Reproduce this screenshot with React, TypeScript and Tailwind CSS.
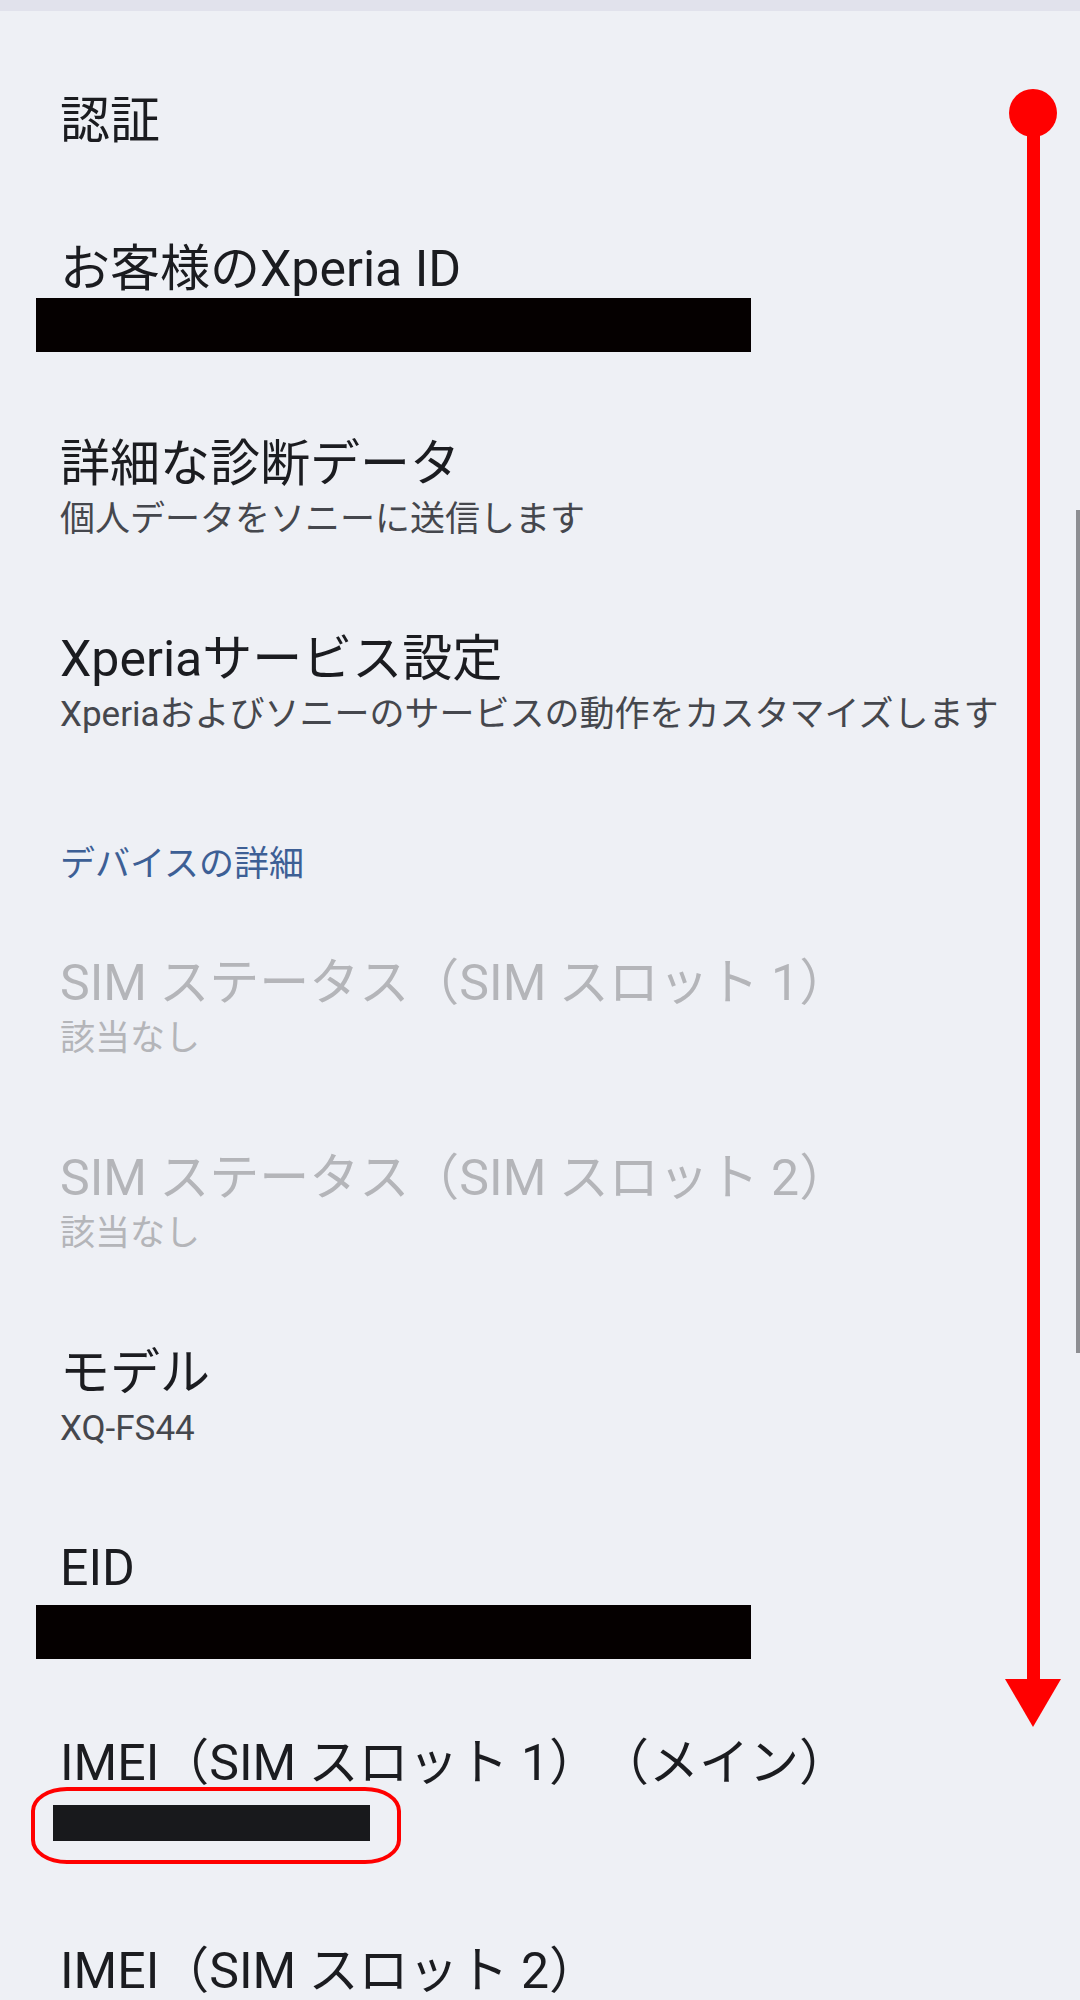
import React from "react";

type Item = {
  title: string;
  sub?: string;
  disabled?: boolean;
  redact?: "wide" | "wideLow" | "imei";
};

const FONT = "font-['Roboto','Noto_Sans_CJK_JP',sans-serif]";

function Row({ item }: { item: Item }) {
  const titleColor = item.disabled ? "text-[#b4b5b9]" : "text-[#1b1c20]";
  const subColor = item.disabled ? "text-[#b4b5b9]" : "text-[#45474d]";

  return (
    <div className="pl-[60px] pr-[120px] pt-[41px] pb-[42px]">
      <div
        className={`text-[50px] leading-[58px] whitespace-nowrap [text-spacing-trim:space-all] ${titleColor}`}
      >
        {item.title}
      </div>
      <div className={`h-[54px] text-[35px] leading-[54px] whitespace-nowrap ${subColor}`}>
        {item.sub}
        {item.redact === "wide" && (
          <div className="-ml-[24px] w-[715px] h-[54px] bg-[#050000]" />
        )}
        {item.redact === "wideLow" && (
          <div className="-ml-[24px] translate-y-[8px] w-[715px] h-[54px] bg-[#050000]" />
        )}
        {item.redact === "imei" && (
          <div className="relative -ml-[7px] mt-[13px] w-[317px] h-[36px] bg-[#18191c]">
            <div className="absolute -left-[22px] -top-[18px] w-[370px] h-[77px] border-[4px] border-[#ff0000] rounded-[36px_/_24px]" />
          </div>
        )}
      </div>
    </div>
  );
}

const account: Item[] = [
  { title: "お客様のXperia ID", redact: "wide" },
  { title: "詳細な診断データ", sub: "個人データをソニーに送信します" },
  {
    title: "Xperiaサービス設定",
    sub: "Xperiaおよびソニーのサービスの動作をカスタマイズします",
  },
];

const device: Item[] = [
  { title: "SIM ステータス（SIM スロット 1）", sub: "該当なし", disabled: true },
  { title: "SIM ステータス（SIM スロット 2）", sub: "該当なし", disabled: true },
  { title: "モデル", sub: "XQ-FS44" },
  { title: "EID", redact: "wideLow" },
  { title: "IMEI（SIM スロット 1）（メイン）", redact: "imei" },
  { title: "IMEI（SIM スロット 2）" },
];

export default function App() {
  return (
    <div className={`relative w-[1080px] h-[2000px] overflow-hidden bg-[#eef0f5] ${FONT}`}>
      {/* status strip */}
      <div className="h-[11px] bg-[#e1e2ec]" />

      {/* 認証 */}
      <div className="pl-[60px] pt-[81px] pb-[49px] text-[50px] leading-[58px] text-[#1b1c20]">
        認証
      </div>

      {account.map((it) => (
        <Row key={it.title} item={it} />
      ))}

      <div className="pl-[60px] pt-[59px] pb-[26px] text-[35px] leading-[44px] text-[#3d5f95]">
        デバイスの詳細
      </div>

      {device.map((it) => (
        <Row key={it.title} item={it} />
      ))}

      {/* scrollbar */}
      <div className="absolute right-0 top-[510px] w-[4px] h-[843px] bg-[#8d8e92]" />

      {/* red scroll arrow annotation */}
      <svg
        className="absolute left-[1000px] top-[80px]"
        width="70"
        height="1660"
        viewBox="1000 80 70 1660"
      >
        <rect x="1027" y="113" width="13" height="1570" fill="#ff0000" />
        <circle cx="1033" cy="113" r="24" fill="#ff0000" />
        <polygon points="1005,1679 1061,1679 1033,1727" fill="#ff0000" />
      </svg>
    </div>
  );
}
